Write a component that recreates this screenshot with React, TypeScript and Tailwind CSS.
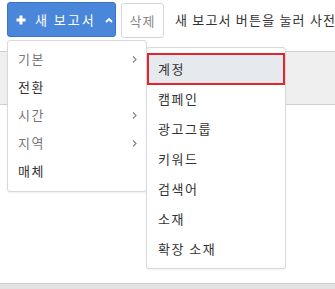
import React from "react";

const mainItems = [
  { label: "기본", sub: true },
  { label: "전환", sub: false },
  { label: "시간", sub: true },
  { label: "지역", sub: true },
  { label: "매체", sub: false },
];

const subItems = ["계정", "캠페인", "광고그룹", "키워드", "검색어", "소재", "확장 소재"];

function Chevron() {
  return (
    <svg width="7" height="9" viewBox="0 0 7 9" className="shrink-0">
      <path d="M2 1.5 L5 4.5 L2 7.5" fill="none" stroke="#888" strokeWidth="1.2" />
    </svg>
  );
}

export default function App() {
  return (
    <div
      className="relative w-[335px] h-[289px] bg-white overflow-hidden flex flex-col text-[13px] text-[#333]"
      style={{ fontFamily: '"Noto Sans CJK KR", "Noto Sans", sans-serif' }}
    >
      <div className="flex items-start pl-[7px] pt-[2px] whitespace-nowrap">
        <button className="shrink-0 flex items-center h-[35px] w-[109px] rounded-[3px] bg-[#4a87da] border border-[#3c74c4] text-white pl-[8px]">
          <svg width="10" height="10" viewBox="0 0 10 10" className="shrink-0">
            <path d="M5 0.5 V9.5 M0.5 5 H9.5" stroke="white" strokeWidth="3" />
          </svg>
          <span className="ml-[9px] tracking-[2px]">새 보고서</span>
          <svg width="8" height="6" viewBox="0 0 8 6" className="ml-[9px] shrink-0">
            <path d="M1 5 L4 2 L7 5" fill="none" stroke="white" strokeWidth="1.8" />
          </svg>
        </button>
        <button className="shrink-0 ml-[5px] mt-[1px] h-[35px] w-[43px] rounded-[3px] bg-white border border-[#d8d8d8] text-[#888] tracking-[1px]">
          삭제
        </button>
        <span className="shrink-0 ml-[11px] mt-[8px] tracking-[1.2px] text-[#333]">새 보고서 버튼을 눌러 사전</span>
      </div>

      <div className="mt-[13px] h-[54px] border-y border-[#cfcfcf] bg-[#efefef]" />
      <div className="flex-1" />
      <div className="h-[6px] border-t border-[#cfcfcf] bg-[#e2e2e2]" />

      {/* main dropdown */}
      <div className="absolute left-[7px] top-[40px] w-[140px] h-[152px] bg-white border border-[#d9d9d9] rounded-[3px] py-[4px] shadow-[0_1px_2px_rgba(0,0,0,0.06)]">
        {mainItems.map((it) => (
          <div
            key={it.label}
            className={`flex items-center justify-between h-[28px] pl-[10px] pr-[8px] tracking-[1.5px] ${
              it.sub ? "text-[#777]" : "text-[#333]"
            }`}
          >
            <span>{it.label}</span>
            {it.sub && <Chevron />}
          </div>
        ))}
      </div>

      {/* sub dropdown */}
      <div className="absolute left-[146px] top-[47px] w-[140px] h-[222px] bg-white border border-[#d9d9d9] rounded-[3px] py-[5px] shadow-[0_1px_2px_rgba(0,0,0,0.06)]">
        {subItems.map((label, i) => (
          <div
            key={label}
            className={
              i === 0
                ? "flex items-center h-[32px] pl-[9px] bg-[#e6e9ed] border-2 border-[#e5232b] tracking-[1.5px] text-[#333] mb-[-1px]"
                : "flex items-center h-[30px] pl-[11px] tracking-[1.5px] text-[#333]"
            }
          >
            {label}
          </div>
        ))}
      </div>
    </div>
  );
}
